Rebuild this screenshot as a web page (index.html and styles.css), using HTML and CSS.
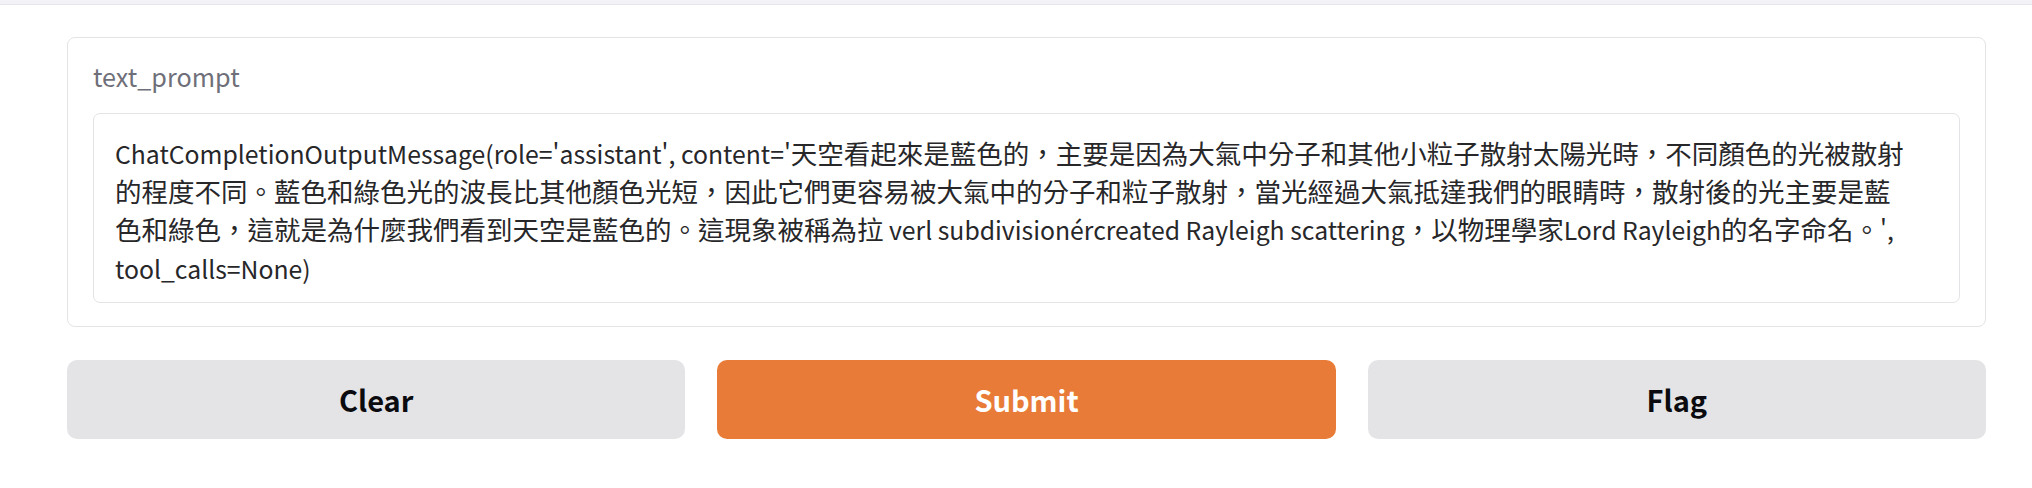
FILE: index.html
```html
<!DOCTYPE html>
<html lang="zh-Hant">
<head>
<meta charset="utf-8">
<title>text_prompt</title>
<link rel="stylesheet" href="styles.css">
</head>
<body>
<div class="topbar"></div>
<main class="page">
  <section class="block">
    <label class="block-label">text_prompt</label>
    <div class="output-box"><span class="lat">ChatCompletionOutputMessage(role='assistant', content='</span>天空看起來是藍色的，主要是因為大氣中分子和其他小粒子散射太陽光時，不同顏色的光被散射<br>的程度不同。藍色和綠色光的波長比其他顏色光短，因此它們更容易被大氣中的分子和粒子散射，當光經過大氣抵達我們的眼睛時，散射後的光主要是藍<br>色和綠色，這就是為什麼我們看到天空是藍色的。這現象被稱為拉<span class="lat"> verl subdivisionércreated Rayleigh scattering</span>，以物理學家<span class="lat">Lord Rayleigh</span>的名字命名。<span class="lat">',</span><br><span class="lat">tool_calls=None)</span></div>
  </section>
  <div class="actions">
    <button class="btn btn-secondary">Clear</button>
    <button class="btn btn-primary">Submit</button>
    <button class="btn btn-secondary">Flag</button>
  </div>
</main>
</body>
</html>
```

FILE: styles.css
```css
* { box-sizing: border-box; }

html, body {
  margin: 0;
  padding: 0;
  background: #ffffff;
  font-family: "Noto Sans CJK TC", "Noto Sans", sans-serif;
}

.topbar {
  height: 5px;
  background: #f3f3f7;
  border-bottom: 1px solid #e6e6ea;
}

.page {
  width: 1919px;
  margin-left: 67px;
  padding-top: 32px;
  display: flex;
  flex-direction: column;
  gap: 33px;
}

.block {
  border: 1px solid #e4e4e7;
  border-radius: 8px;
  padding: 20px 25px 23px 25px;
  display: flex;
  flex-direction: column;
  gap: 17px;
  background: #fff;
}

.block-label {
  font-size: 25.2px;
  line-height: 37.7px;
  color: #6f6f79;
}

.output-box {
  border: 1px solid #e4e4e7;
  border-radius: 7px;
  padding: 20px 20px 14px 21px;
  font-size: 26.5px;
  line-height: 37.7px;
  color: #27272a;
  white-space: nowrap;
  overflow: hidden;
}

.lat {
  font-size: 0.935em;
}

.actions {
  display: flex;
  gap: 32px;
}

.btn {
  flex: 1 1 0;
  height: 79px;
  border: none;
  border-radius: 10px;
  font-family: "Noto Sans CJK TC", "Noto Sans", sans-serif;
  font-weight: 700;
  font-size: 29px;
  cursor: pointer;
}

.btn-secondary {
  background: #e4e4e7;
  color: #0b0b0f;
}

.btn-primary {
  background: #e87b37;
  color: #ffffff;
}
```
